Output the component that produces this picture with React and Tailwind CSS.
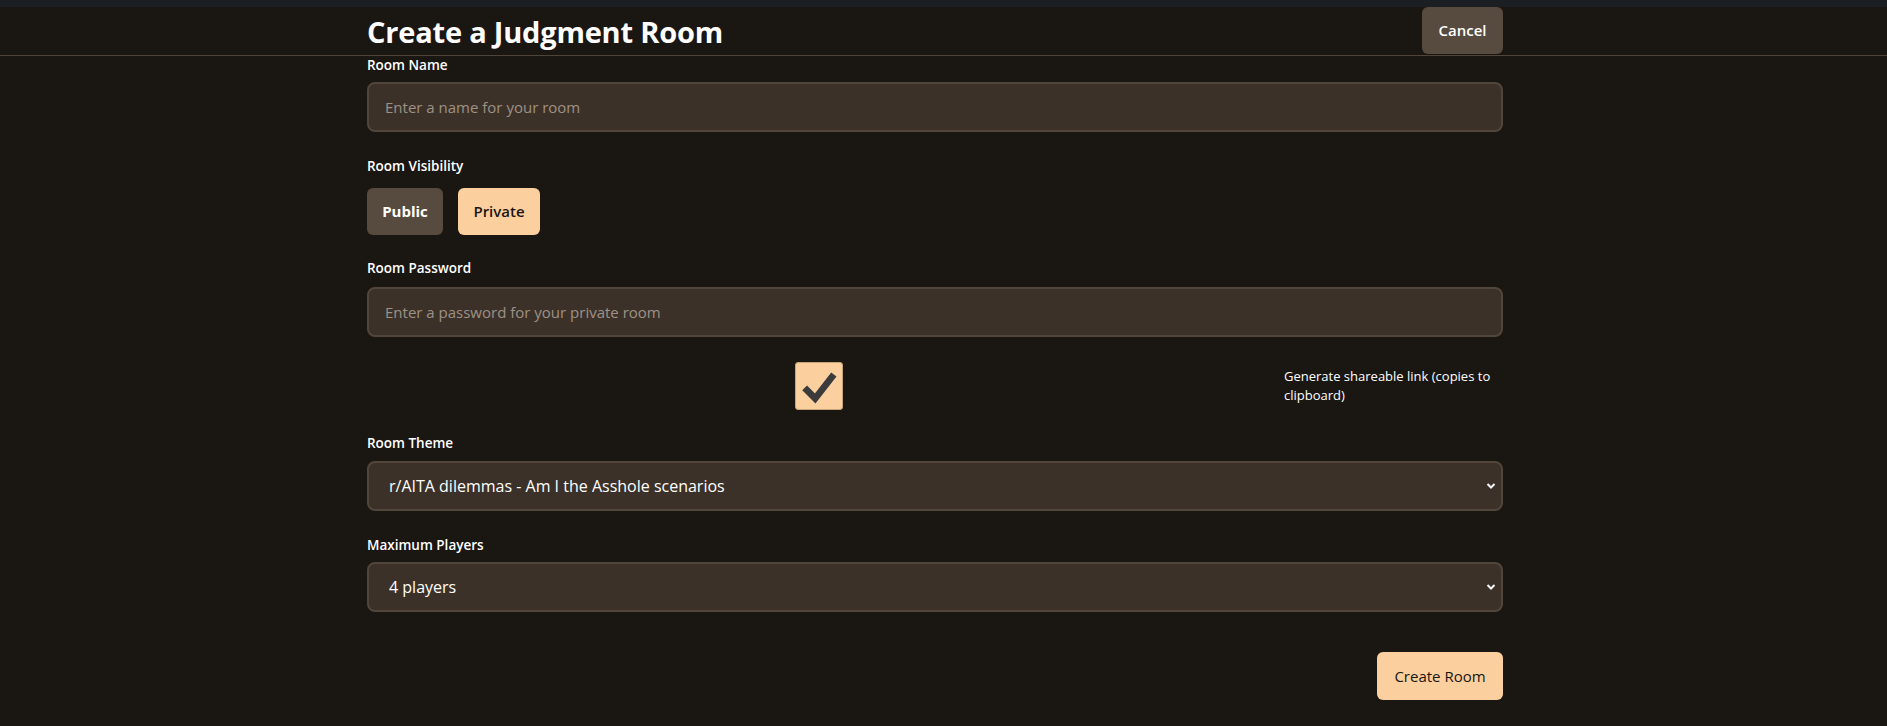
export default function App() {
  const label = "block text-[13.5px] leading-[18px] font-semibold text-white";
  const field =
    "block w-full h-[50px] rounded-lg border-2 border-[#52463b] bg-[#3c3128] px-[16px] text-[15px] text-white placeholder:text-[#9d9286] outline-none";
  const Chevron = () => (
    <svg
      className="pointer-events-none absolute right-[7px] top-1/2 -translate-y-1/2"
      width="10"
      height="7"
      viewBox="0 0 10 7"
    >
      <path d="M1.5 1.5 L5 5 L8.5 1.5" stroke="#f5f5f5" strokeWidth="2" fill="none" />
    </svg>
  );
  return (
    <div className="min-h-[726px] bg-[#1a1612] text-white font-['Open_Sans',sans-serif]">
      <div className="h-[7px] bg-[#1b1e22]" />
      <div className="border-b border-[#4e443a] pr-[17px]">
        <div className="mx-auto flex h-[48px] w-[1136px] items-start justify-between">
          <h1 className="mt-[8px] text-[29px] font-bold leading-[34px] tracking-[-0.2px]">
            Create a Judgment Room
          </h1>
          <button className="h-[47px] w-[81px] rounded-md bg-[#574a3e] text-[15px] font-semibold text-white">
            Cancel
          </button>
        </div>
      </div>
      <div className="pr-[17px]">
        <div className="mx-auto w-[1136px]">
          <label className={label + " mb-[8px]"}>Room Name</label>
          <input className={field} placeholder="Enter a name for your room" />

          <label className={label + " mt-[25px] mb-[13px]"}>Room Visibility</label>
          <div className="flex gap-[15px]">
            <button className="h-[47px] w-[76px] rounded-md bg-[#574a3e] text-[15px] font-bold text-white">
              Public
            </button>
            <button className="h-[47px] w-[82px] rounded-md bg-[#fccf9e] text-[15px] font-semibold text-[#1a1612]">
              Private
            </button>
          </div>

          <label className={label + " mt-[24px] mb-[10px]"}>Room Password</label>
          <input className={field} placeholder="Enter a password for your private room" />

          <div className="mt-[25px] flex h-[48px] items-center gap-[14px]">
            <div className="flex flex-1 justify-center">
              <div className="flex h-[48px] w-[48px] items-center justify-center rounded-[3px] border border-[#c9a47a] bg-[#fccf9e]">
                <svg width="48" height="48" viewBox="0 0 48 48">
                  <path
                    d="M9 26 L20 37 L39.5 12"
                    stroke="#3b3b3b"
                    strokeWidth="7"
                    fill="none"
                    strokeLinejoin="miter"
                  />
                </svg>
              </div>
            </div>
            <div className="w-[219px] text-[13px] leading-[19px] text-white">
              Generate shareable link (copies to clipboard)
            </div>
          </div>

          <label className={label + " mt-[24px] mb-[9px]"}>Room Theme</label>
          <div className="relative">
            <select className={field + " appearance-none pl-[20px] text-[16px]"} defaultValue="aita">
              <option value="aita">r/AITA dilemmas - Am I the Asshole scenarios</option>
            </select>
            <Chevron />
          </div>

          <label className={label + " mt-[25px] mb-[8px]"}>Maximum Players</label>
          <div className="relative">
            <select className={field + " appearance-none pl-[20px] text-[16px]"} defaultValue="4">
              <option value="4">4 players</option>
            </select>
            <Chevron />
          </div>

          <div className="mt-[40px] flex justify-end">
            <button className="h-[48px] w-[126px] rounded-md bg-[#fccf9e] text-[15px] font-medium text-[#1a1612]">
              Create Room
            </button>
          </div>
        </div>
      </div>
    </div>
  );
}
